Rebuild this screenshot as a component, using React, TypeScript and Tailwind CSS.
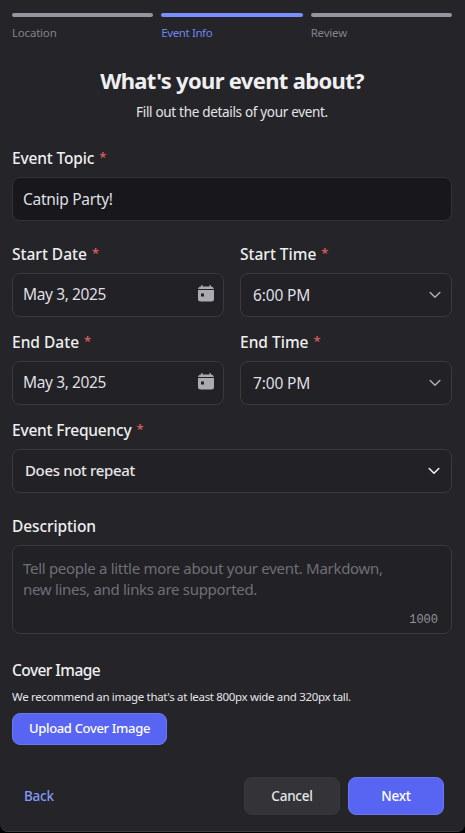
import { useState } from 'react';

const steps = ['Location', 'Event Info', 'Review'];

function Label({ text, required, className = 'tracking-[-0.1px]' }: { text: string; required?: boolean; className?: string }) {
  return (
    <div className={`flex h-5 items-center text-[15.5px] leading-5 font-medium text-[#efeff0] ${className}`}>
      {text}
      {required && <span className="ml-[5px] pb-0.5 text-[13px] leading-4 text-[#e0605f]">*</span>}
    </div>
  );
}

function CalendarIcon() {
  return (
    <svg className="mb-[3px]" width="16" height="17" viewBox="0 0 16 17" fill="#aaaab1">
      <path d="M3 .8a.8.8 0 0 1 1.6 0v.7h6.8V.8a.8.8 0 0 1 1.6 0v.7a3 3 0 0 1 3 2.5H0a3 3 0 0 1 3-2.5z" />
      <path fillRule="evenodd" d="M0 5h16v9a2.5 2.5 0 0 1-2.5 2.5h-11A2.5 2.5 0 0 1 0 14zm3 3.5v3h3v-3z" />
    </svg>
  );
}

function Chevron({ color }: { color: string }) {
  return (
    <svg width="12" height="8" viewBox="0 0 12 8" fill="none" stroke={color} strokeWidth="1.6" strokeLinecap="round" strokeLinejoin="round">
      <path d="M1.2 1.5 6 6.2l4.8-4.7" />
    </svg>
  );
}

function DateField({ label, value }: { label: string; value: string }) {
  return (
    <div className="w-[212px]">
      <Label text={label} required className="tracking-[0px]" />
      <button className="mt-[9px] flex h-11 w-full items-center justify-between rounded-lg border border-[#39393f] bg-[#222126] pr-[9px] pl-2.5 text-[15.5px] tracking-[-0.38px] text-[#dfdfe2]">
        {value}
        <CalendarIcon />
      </button>
    </div>
  );
}

function TimeField({ label, value }: { label: string; value: string }) {
  return (
    <div className="w-[212px]">
      <Label text={label} required className="tracking-[0px]" />
      <button className="mt-[9px] flex h-11 w-full items-center justify-between rounded-lg border border-[#39393f] bg-[#222126] pr-[10px] pl-3 text-[#dfdfe2]">
        <span className="pt-0.5 text-[15.5px] tracking-[-0.15px]">{value}</span>
        <Chevron color="#aaaab1" />
      </button>
    </div>
  );
}

export default function App() {
  const [current] = useState(1);

  return (
    <div className="h-[833px] w-[465px] bg-black font-['Noto_Sans',sans-serif]">
      <div className="flex h-[832px] flex-col rounded-b-lg border-b border-[#3b3b41] bg-[#242429] px-3 pt-[13px]">
        <div className="flex w-[440px] gap-2">
          {steps.map((step, i) => (
            <div key={step} className="flex-1">
              <div className={i === current ? 'h-1 rounded-sm bg-[#7a8fff]' : 'h-1 rounded-sm bg-[#96959e]'} />
              <div className={i === current ? 'mt-2 text-[11.5px] leading-4 tracking-[-0.4px] text-[#7084ea]' : 'mt-2 text-[11.5px] leading-4 tracking-[-0.2px] text-[#82828a]'}>
                {step}
              </div>
            </div>
          ))}
        </div>

        <div className="mt-6 w-[440px] text-center">
          <h1 className="text-[22px] leading-[30px] font-bold tracking-[-0.68px] text-[#efeff0]">What's your event about?</h1>
          <p className="mt-[7px] text-[13.5px] leading-5 tracking-[-0.32px] text-[#e4e4e7]">Fill out the details of your event.</p>
        </div>

        <div className="mt-[26px] w-[440px]">
          <Label text="Event Topic" required className="tracking-[-0.15px]" />
          <div className="mt-[9px] flex h-11 items-center rounded-lg border border-[#323238] bg-[#18171c] px-2.5 pt-0.5 text-[15.5px] tracking-[-0.28px] text-[#dfdfe2]">
            Catnip Party!
          </div>
        </div>

        <div className="mt-[23px] flex w-[440px] gap-4">
          <DateField label="Start Date" value="May 3, 2025" />
          <TimeField label="Start Time" value="6:00 PM" />
        </div>
        <div className="mt-[15px] flex w-[440px] gap-4">
          <DateField label="End Date" value="May 3, 2025" />
          <TimeField label="End Time" value="7:00 PM" />
        </div>

        <div className="mt-[15px] w-[440px]">
          <Label text="Event Frequency" required className="tracking-[-0.2px]" />
          <button className="mt-[9px] flex h-11 w-full items-center justify-between rounded-lg border border-[#39393f] bg-[#222126] pr-[11px] pl-3 text-[#e6e6e8]">
            <span className="pb-px text-[15px] font-medium tracking-[-0.35px]">Does not repeat</span>
            <Chevron color="#efeff0" />
          </button>
        </div>

        <div className="mt-[23px] w-[440px]">
          <Label text="Description" />
          <div className="mt-[9px] flex h-[89px] flex-col rounded-lg border border-[#39393f] bg-[#222126] px-2.5 pt-3 leading-[21px] text-[#6f6f78]">
            <div className="text-[15px] tracking-[-0.3px]">
              Tell people a little more about your event. Markdown,
              <br />
              new lines, and links are supported.
            </div>
            <div className="mt-2.5 pr-[3px] text-right font-['Liberation_Mono',monospace] text-xs leading-5 text-[#94949c]">1000</div>
          </div>
        </div>

        <div className="mt-[26px] w-[440px]">
          <Label text="Cover Image" className="tracking-[-0.55px]" />
          <p className="mt-[9px] text-[11.5px] leading-4 tracking-[-0.33px] whitespace-nowrap text-[#e4e4e7]">
            We recommend an image that's at least 800px wide and 320px tall.
          </p>
          <button className="mt-2 h-8 w-[155px] rounded-lg border border-[#6b76f5] bg-[#5865f2] text-[13px] font-medium tracking-[-0.33px] text-white">
            Upload Cover Image
          </button>
        </div>

        <div className="mt-8 flex w-[432px] items-center gap-2 text-[13.5px] font-medium tracking-[-0.25px]">
          <button className="mr-auto pl-3 text-[#8399f3]">Back</button>
          <button className="h-[38px] w-24 rounded-lg border border-[#38383d] bg-[#333338] text-[#e6e6e8]">Cancel</button>
          <button className="h-[38px] w-24 rounded-lg border border-[#6b76f5] bg-[#5865f2] text-white">Next</button>
        </div>
      </div>
    </div>
  );
}
